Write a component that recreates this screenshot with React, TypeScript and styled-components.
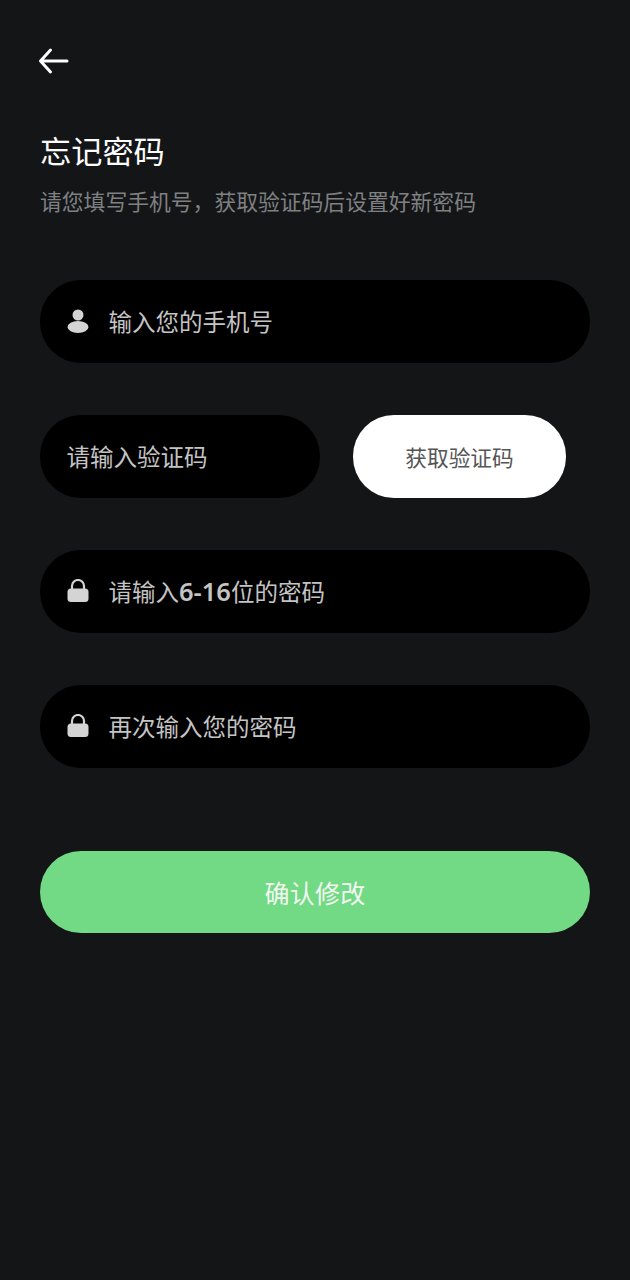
import styled, { createGlobalStyle } from 'styled-components';

const GlobalStyle = createGlobalStyle`
  html, body {
    margin: 0;
    padding: 0;
    background: #131517;
  }

  * {
    box-sizing: border-box;
  }
`;

const Page = styled.div`
  width: 630px;
  height: 1280px;
  padding: 43px 40px 0;
  background: #131517;
  font-family: 'Noto Sans CJK SC', 'Noto Sans', sans-serif;
  overflow: hidden;
`;

const BackButton = styled.button`
  display: block;
  width: 32px;
  height: 36px;
  padding: 0;
  margin: 0 0 0 -2px;
  border: 0;
  background: none;
`;

const Title = styled.h1`
  margin: 49px 0 0;
  font-size: 31.2px;
  line-height: 44px;
  font-weight: 400;
  color: #fbfbfb;
`;

const Subtitle = styled.p`
  margin: 13px 0 0;
  font-size: 21.8px;
  line-height: 32px;
  font-weight: 400;
  color: #7f8082;
`;

const Form = styled.div`
  display: flex;
  flex-direction: column;
  margin-top: 63px;
`;

const Row = styled.div`
  display: flex;
  margin-top: 52.5px;

  &:first-child {
    margin-top: 0;
  }
`;

const Field = styled.div<{ $width?: number }>`
  display: flex;
  align-items: center;
  width: ${({ $width }) => $width ?? 550}px;
  height: 82.5px;
  padding-left: 27px;
  border-radius: 41px;
  background: #000;
`;

const IconSlot = styled.span`
  display: flex;
  width: 22px;
  height: 24px;
  margin-right: 20px;
  flex: none;
`;

const Placeholder = styled.span`
  font-size: 23.5px;
  line-height: 32px;
  color: #c4c4c4;
  margin-left: -0.5px;

  b {
    font-family: 'Noto Sans', sans-serif;
    font-size: 25.5px;
    font-weight: 600;
  }
`;

const CodeButton = styled.button`
  width: 213px;
  height: 82.5px;
  margin-left: 33px;
  padding: 0;
  border: 0;
  border-radius: 41px;
  background: #fff;
  color: #555;
  font-family: inherit;
  font-size: 21.7px;
`;

const SubmitButton = styled.button`
  width: 550px;
  height: 82.5px;
  margin-top: 83px;
  padding: 0;
  border: 0;
  border-radius: 41px;
  background: #72d985;
  color: #f2f8f1;
  font-family: inherit;
  font-size: 25px;
  letter-spacing: 0.2px;
`;

const BackIcon = () => (
  <svg width="32" height="36" viewBox="0 0 32 36" fill="none">
    <path
      d="M29 18H3M12.5 7 2.5 18l10 11"
      stroke="#fff"
      strokeWidth="3"
      strokeLinecap="round"
      strokeLinejoin="round"
    />
  </svg>
);

const UserIcon = () => (
  <svg width="22" height="24" viewBox="0 0 22 24" fill="#d4d4d4">
    <circle cx="11" cy="6" r="5.5" />
    <ellipse cx="11" cy="18" rx="10.5" ry="6" />
  </svg>
);

const LockIcon = () => (
  <svg width="22" height="24" viewBox="0 0 22 24" fill="none">
    <path d="M5 12V7a6 6 0 0 1 12 0v5" stroke="#d4d4d4" strokeWidth="2.2" />
    <rect x="0.5" y="9.5" width="21" height="13.5" rx="3.5" fill="#d4d4d4" />
  </svg>
);

export default function App() {
  return (
    <Page>
      <GlobalStyle />
      <BackButton aria-label="返回">
        <BackIcon />
      </BackButton>
      <Title>忘记密码</Title>
      <Subtitle>请您填写手机号，获取验证码后设置好新密码</Subtitle>
      <Form>
        <Row>
          <Field>
            <IconSlot>
              <UserIcon />
            </IconSlot>
            <Placeholder>输入您的手机号</Placeholder>
          </Field>
        </Row>
        <Row>
          <Field $width={280}>
            <Placeholder>请输入验证码</Placeholder>
          </Field>
          <CodeButton>获取验证码</CodeButton>
        </Row>
        <Row>
          <Field>
            <IconSlot>
              <LockIcon />
            </IconSlot>
            <Placeholder>
              请输入<b>6-16</b>位的密码
            </Placeholder>
          </Field>
        </Row>
        <Row>
          <Field>
            <IconSlot>
              <LockIcon />
            </IconSlot>
            <Placeholder>再次输入您的密码</Placeholder>
          </Field>
        </Row>
        <SubmitButton>确认修改</SubmitButton>
      </Form>
    </Page>
  );
}
